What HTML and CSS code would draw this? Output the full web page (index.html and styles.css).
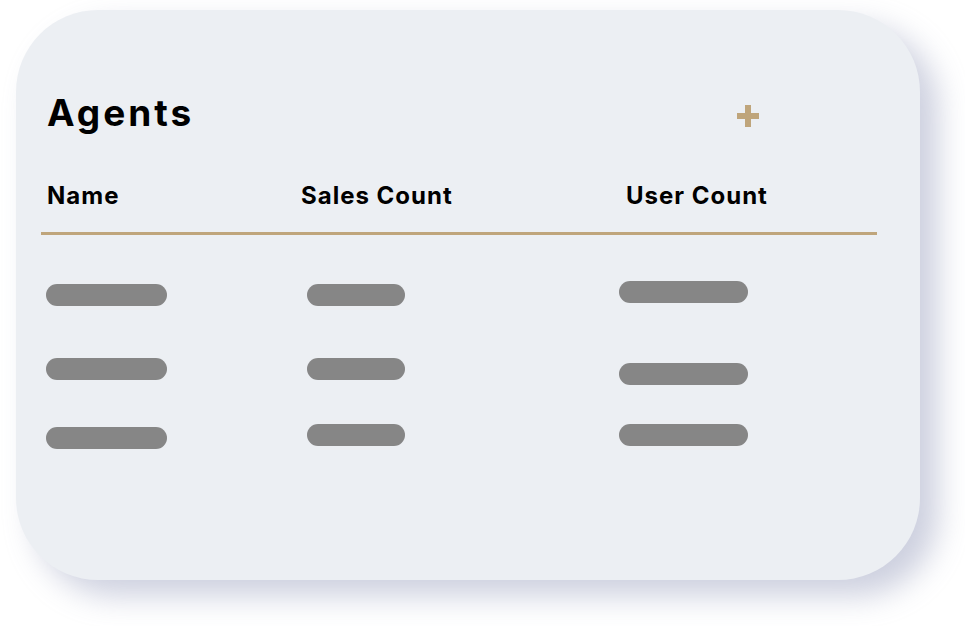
FILE: index.html
```html
<!DOCTYPE html>
<html lang="en">
<head>
<meta charset="utf-8">
<title>Agents</title>
<link rel="stylesheet" href="styles.css">
</head>
<body>
<div class="card">
  <div class="card-head">
    <h1 class="title">Agents</h1>
    <button class="add" aria-label="Add agent">
      <svg width="22" height="22" viewBox="0 0 22 22"><path d="M11 0v22M0 11h22" stroke="#bfa57b" stroke-width="6" fill="none"/></svg>
    </button>
  </div>
  <div class="thead">
    <div class="th">Name</div>
    <div class="th">Sales Count</div>
    <div class="th">User Count</div>
  </div>
  <div class="rule"></div>
  <div class="tbody">
    <div class="col col-name">
      <span class="bar"></span><span class="bar"></span><span class="bar"></span>
    </div>
    <div class="col col-sales">
      <span class="bar"></span><span class="bar"></span><span class="bar"></span>
    </div>
    <div class="col col-users">
      <span class="bar"></span><span class="bar"></span><span class="bar"></span>
    </div>
  </div>
</div>
</body>
</html>
```
FILE: styles.css
```css
* { box-sizing: border-box; }
html, body { margin: 0; padding: 0; background: #ffffff; }
body {
  font-family: Inter, "Noto Sans", sans-serif;
  color: #000;
  width: 965px;
  height: 626px;
  overflow: hidden;
}
.card {
  margin: 10px 0 0 16px;
  width: 904px;
  height: 570px;
  padding-top: 80px;
  background: #eceff3;
  border-radius: 82px;
  box-shadow: 18px 16px 30px rgba(188, 192, 212, 0.75), -10px -10px 24px rgba(255,255,255,0.9);
}
.card-head {
  display: flex;
  align-items: flex-start;
  justify-content: space-between;
  padding: 0 161px 0 31px;
}
.title {
  margin: 0;
  font-size: 37px;
  line-height: 45px;
  font-weight: 700;
  letter-spacing: 3px;
}
.add {
  margin-top: 15px;
  padding: 0;
  border: 0;
  background: none;
  width: 22px;
  height: 22px;
  display: block;
}
.add svg { display: block; }
.thead {
  display: grid;
  grid-template-columns: 254px 325px 1fr;
  padding-left: 31px;
  margin-top: 46px;
}
.th {
  font-size: 24px;
  line-height: 29px;
  font-weight: 700;
  letter-spacing: 1px;
}
.rule {
  margin: 22px 0 0 25px;
  width: 836px;
  height: 3px;
  background: #bfa57b;
}
.tbody {
  display: grid;
  grid-template-columns: 261px 312px 1fr;
  padding-left: 30px;
}
.col { display: flex; flex-direction: column; align-items: flex-start; }
.bar {
  display: block;
  height: 22px;
  border-radius: 11px;
  background: #868686;
}
.col-name .bar { width: 121px; }
.col-sales .bar { width: 98px; }
.col-users .bar { width: 129px; }
.col-name .bar:nth-child(1) { margin-top: 49px; }
.col-name .bar:nth-child(2) { margin-top: 52px; }
.col-name .bar:nth-child(3) { margin-top: 47px; }
.col-sales .bar:nth-child(1) { margin-top: 49px; }
.col-sales .bar:nth-child(2) { margin-top: 52px; }
.col-sales .bar:nth-child(3) { margin-top: 44px; }
.col-users .bar:nth-child(1) { margin-top: 46px; }
.col-users .bar:nth-child(2) { margin-top: 60px; }
.col-users .bar:nth-child(3) { margin-top: 39px; }
```
